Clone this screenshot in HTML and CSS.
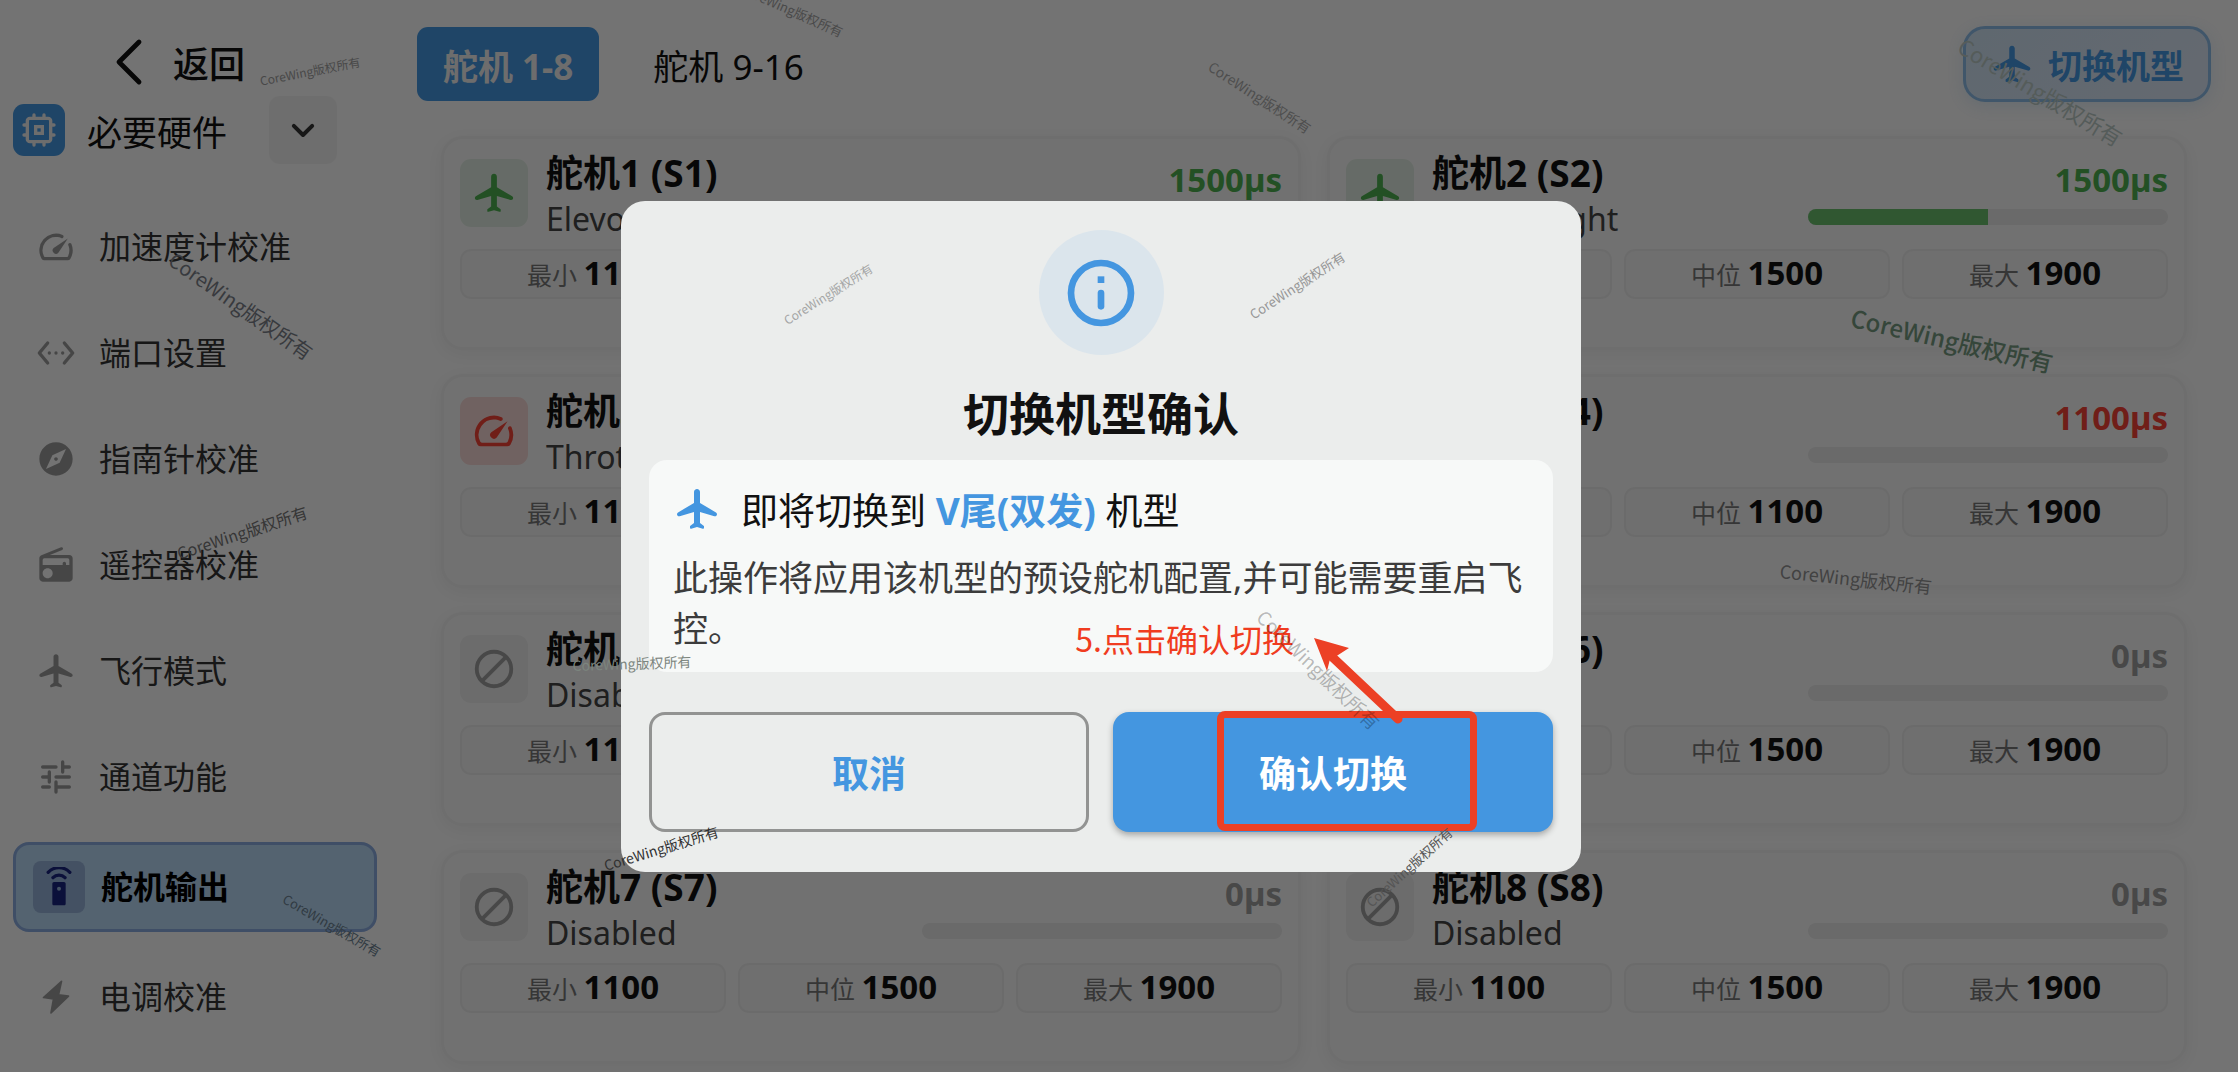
FILE: index.html
```
<!DOCTYPE html>
<html lang="zh-CN">
<head>
  <meta charset="UTF-8">
  <title>舵机输出</title>
  <link rel="stylesheet" href="styles.css">
</head>
<body>
  <svg class="sprite" aria-hidden="true">
    <symbol id="i-plane" viewBox="0 0 24 24"><path d="M21.48 13.7L13.5 9V3.5C13.5 2.67 12.83 2 12 2s-1.5.67-1.5 1.5V9l-7.98 4.7c-.32.18-.52.53-.52.89 0 .7.67 1.2 1.34 1.01L10.5 13.5V19l-1.8 1.35c-.13.09-.2.24-.2.4v.59c0 .33.32.57.64.48L12 21l2.86.82c.32.09.64-.15.64-.48v-.59c0-.16-.07-.31-.2-.4L13.5 19v-5.5l7.16 2.1c.67.19 1.34-.31 1.34-1.01 0-.36-.2-.71-.52-.89z"/></symbol>
    <symbol id="i-speed" viewBox="0 0 24 24"><path d="M19.46 10a1 1 0 0 0-.07 1 7.55 7.55 0 0 1 .52 1.81 8 8 0 0 1-.69 4.73 1 1 0 0 1-.89.53H5.68a1 1 0 0 1-.89-.54A8 8 0 0 1 13 6.06a7.69 7.69 0 0 1 2.11.56 1 1 0 0 0 1-.07 1 1 0 0 0-.17-1.76A10 10 0 0 0 3.35 19a2 2 0 0 0 1.72 1h13.85a2 2 0 0 0 1.74-1 10 10 0 0 0 .55-8.89 1 1 0 0 0-1.75-.11z"/><path d="M10.59 12.59a2 2 0 0 0 2.83 2.83l5.66-8.49z"/></symbol>
    <symbol id="i-ports" viewBox="0 0 24 24"><path d="M7 6L2 12l5 6M17 6l5 6-5 6" fill="none" stroke="currentColor" stroke-width="2" stroke-linecap="round" stroke-linejoin="round"/><circle cx="8" cy="12" r="1"/><circle cx="12" cy="12" r="1"/><circle cx="16" cy="12" r="1"/></symbol>
    <symbol id="i-compass" viewBox="0 0 24 24"><path d="M12 10.9c-.61 0-1.1.49-1.1 1.1s.49 1.1 1.1 1.1c.61 0 1.1-.49 1.1-1.1s-.49-1.1-1.1-1.1zM12 2C6.48 2 2 6.48 2 12s4.48 10 10 10 10-4.48 10-10S17.52 2 12 2zm2.19 12.19L6 18l3.81-8.19L18 6l-3.81 8.19z"/></symbol>
    <symbol id="i-radio" viewBox="0 0 24 24"><path d="M3.24 6.15C2.51 6.43 2 7.17 2 8v12c0 1.1.89 2 2 2h16c1.11 0 2-.9 2-2V8c0-1.11-.89-2-2-2H8.3l7.43-3a.9.9 0 0 0-.68-1.66L3.24 6.15zM7 20c-1.66 0-3-1.34-3-3s1.34-3 3-3 3 1.34 3 3-1.34 3-3 3zm13-8h-2v-1a1 1 0 0 0-2 0v1H4V9a1 1 0 0 1 1-1h14a1 1 0 0 1 1 1v3z"/></symbol>
    <symbol id="i-tune" viewBox="0 0 24 24"><path d="M4 6h8M16 3v6M16 6h4M4 12h4M8 9v6M12 12h8M4 18h4M12 15v6M12 18h8" fill="none" stroke="currentColor" stroke-width="2" stroke-linecap="round"/></symbol>
    <symbol id="i-remote" viewBox="0 0 24 24"><path fill-rule="evenodd" d="M15 9H9c-.55 0-1 .45-1 1v12c0 .55.45 1 1 1h6c.55 0 1-.45 1-1V10c0-.55-.45-1-1-1zm-3 5.200a1.200 1.200 0 1 1 0-2.400 1.200 1.200 0 0 1 0 2.400z"/><path d="M8.400 6.400a5 5 0 0 1 7.200 0M5.500 3.200a9 9 0 0 1 13 0" fill="none" stroke="currentColor" stroke-width="2" stroke-linecap="round"/></symbol>
    <symbol id="i-bolt" viewBox="0 0 24 24"><path d="M15.300 2.600L13.500 10.700l6 .8L9 21.500l1.500-8.300-6-.9z" stroke="currentColor" stroke-linejoin="round"/></symbol>
    <symbol id="i-block" viewBox="0 0 24 24"><g fill="none" stroke="currentColor" stroke-width="2"><circle cx="12" cy="12" r="9"/><path d="M18.300 5.700L5.700 18.300"/></g></symbol>
    <symbol id="i-chip" viewBox="0 0 24 24"><g fill="none" stroke="currentColor" stroke-width="2" stroke-linecap="round"><rect x="5" y="5" width="14" height="14" rx="1.500"/><rect x="10" y="10" width="4" height="4"/><path d="M9 3v2M15 3v2M9 19v2M15 19v2M3 9h2M3 15h2M19 9h2M19 15h2"/></g></symbol>
    <symbol id="i-down" viewBox="0 0 24 24"><path d="M6.500 9.500L12 15l5.500-5.500" fill="none" stroke="currentColor" stroke-width="2.400" stroke-linecap="round" stroke-linejoin="round"/></symbol>
    <symbol id="i-back" viewBox="0 0 24 24"><path d="M17 2L7 12l10 10" fill="none" stroke="currentColor" stroke-width="2.400" stroke-linecap="round" stroke-linejoin="round"/></symbol>
    <symbol id="i-info" viewBox="0 0 24 24"><circle cx="12" cy="12" r="9" fill="none" stroke="currentColor" stroke-width="2"/><path d="M11 7h2v2h-2z"/><rect x="11" y="11" width="2" height="6" rx="1"/></symbol>
  </svg>

  <div class="app">
    <aside class="sidebar">
      <button class="back"><svg><use href="#i-back"/></svg>返回</button>
      <div class="group">
        <span class="group-icon"><svg><use href="#i-chip"/></svg></span>
        <span class="group-title">必要硬件</span>
        <button class="group-toggle" aria-label="展开"><svg><use href="#i-down"/></svg></button>
      </div>
      <nav class="menu">
        <a href="#" class="menu-item"><span class="menu-icon"><svg><use href="#i-speed"/></svg></span>加速度计校准</a>
        <a href="#" class="menu-item"><span class="menu-icon"><svg><use href="#i-ports"/></svg></span>端口设置</a>
        <a href="#" class="menu-item"><span class="menu-icon"><svg><use href="#i-compass"/></svg></span>指南针校准</a>
        <a href="#" class="menu-item"><span class="menu-icon"><svg><use href="#i-radio"/></svg></span>遥控器校准</a>
        <a href="#" class="menu-item"><span class="menu-icon"><svg><use href="#i-plane"/></svg></span>飞行模式</a>
        <a href="#" class="menu-item"><span class="menu-icon"><svg><use href="#i-tune"/></svg></span>通道功能</a>
        <a href="#" class="menu-item active"><span class="menu-icon"><svg><use href="#i-remote"/></svg></span>舵机输出</a>
        <a href="#" class="menu-item"><span class="menu-icon"><svg><use href="#i-bolt"/></svg></span>电调校准</a>
      </nav>
    </aside>

    <main class="content">
      <header class="toolbar">
        <button class="tab selected">舵机 1-8</button>
        <button class="tab">舵机 9-16</button>
        <button class="switch"><svg><use href="#i-plane"/></svg>切换机型</button>
      </header>
      <div class="servos" id="servos"></div>
    </main>
  </div>

  <div class="overlay">
    <div class="dialog" role="dialog" aria-labelledby="dialogTitle">
      <div class="dialog-icon"><svg><use href="#i-info"/></svg></div>
      <h2 id="dialogTitle">切换机型确认</h2>
      <div class="notice">
        <div class="notice-title"><svg><use href="#i-plane"/></svg><span>即将切换到 <b>V尾(双发)</b> 机型</span></div>
        <p>此操作将应用该机型的预设舵机配置,并可能需要重启飞控。</p>
      </div>
      <div class="actions">
        <button class="btn cancel">取消</button>
        <button class="btn confirm">确认切换</button>
        <div class="mark">
          <span class="mark-text">5.点击确认切换</span>
          <svg class="mark-arrow" viewBox="0 0 100 100"><path d="M24 25L94 91" stroke="#ec4025" stroke-width="9" stroke-linecap="round"/><path d="M10 10L45 20 31 29 26 31 23 43z" fill="#ec4025"/></svg>
        </div>
      </div>
    </div>
  </div>

  <div class="watermarks" id="watermarks"></div>

  <script>
    const servos = [
      { name: "Elevon Left", icon: "plane", tone: "green", value: 1500, mid: 1500, fill: 50 },
      { name: "Elevon Right", icon: "plane", tone: "green", value: 1500, mid: 1500, fill: 50 },
      { name: "Throttle", icon: "speed", tone: "red", value: 1100, mid: 1100, fill: 0 },
      { name: "Throttle", icon: "speed", tone: "red", value: 1100, mid: 1100, fill: 0 },
      { name: "Disabled", icon: "block", tone: "gray", value: 0, mid: 1500, fill: 0 },
      { name: "Disabled", icon: "block", tone: "gray", value: 0, mid: 1500, fill: 0 },
      { name: "Disabled", icon: "block", tone: "gray", value: 0, mid: 1500, fill: 0 },
      { name: "Disabled", icon: "block", tone: "gray", value: 0, mid: 1500, fill: 0 }
    ];

    document.getElementById("servos").innerHTML = servos.map((s, i) => `
      <section class="card ${s.tone}">
        <div class="card-head">
          <span class="card-icon"><svg><use href="#i-${s.icon}"/></svg></span>
          <div class="card-name">
            <h3>舵机${i + 1} (S${i + 1})</h3>
            <div>${s.name}</div>
          </div>
          <div class="card-value">
            <strong>${s.value}µs</strong>
            <div class="bar"><div class="bar-fill" style="width: ${s.fill}%"></div></div>
          </div>
        </div>
        <div class="limits">
          <div>最小 <b>1100</b></div>
          <div>中位 <b>${s.mid}</b></div>
          <div>最大 <b>1900</b></div>
        </div>
      </section>`).join("");

    // x, y of the centre, font size, angle, color
    const marks = [
      [310, 71, 12, -11, "#484848"],
      [241, 306, 20, 35, "#383a3e"],
      [242, 532, 16, -18, "#363636"],
      [792, 10, 13, 24, "#4a4a4a"],
      [1260, 97, 14, 33, "#4e4e4e"],
      [2041, 91, 22, 31, "#555c5a"],
      [1952, 340, 24, 13, "#35463a", 500],
      [1856, 578, 18, 6, "#424242"],
      [828, 294, 12, -32, "#a4a5a5"],
      [1297, 285, 13, -33, "#969696"],
      [632, 663, 14, -2, "#7c857e"],
      [661, 848, 14, -17, "#303030"],
      [1319, 669, 19, 44, "rgba(0,0,0,.27)"],
      [1409, 867, 13, -42, "#555555"],
      [332, 925, 13, 30, "#303a42"]
    ];

    const layer = document.getElementById("watermarks");
    marks.forEach(([x, y, size, angle, color, weight]) => {
      const span = document.createElement("span");
      span.textContent = "CoreWing版权所有";
      span.style.left = x + "px";
      span.style.top = y + "px";
      span.style.fontSize = size + "px";
      span.style.fontWeight = weight || 400;
      span.style.color = color;
      span.style.transform = `translate(-50%, -50%) rotate(${angle}deg)`;
      layer.appendChild(span);
    });
  </script>
</body>
</html>
```
FILE: styles.css
```
* {
  box-sizing: border-box;
}
body {
  margin: 0;
  height: 100vh;
  overflow: hidden;
  position: relative;
  background: #fafafa;
  color: #111;
  font-family: "Noto Sans", "Noto Sans CJK SC", sans-serif;
}
button {
  font-family: inherit;
  cursor: pointer;
  border: none;
  background: none;
  padding: 0;
  color: inherit;
}
svg {
  display: block;
  fill: currentColor;
  flex-shrink: 0;
}
h2, h3, p {
  margin: 0;
}
.sprite {
  display: none;
}
.app {
  display: flex;
  height: 100%;
}

/* sidebar */
.sidebar {
  width: 390px;
  flex-shrink: 0;
  padding: 28px 13px 0;
}
.back {
  display: flex;
  align-items: center;
  gap: 20px;
  height: 68px;
  padding-left: 92px;
  font-size: 36px;
  font-weight: 500;
}
.back svg {
  width: 48px;
  height: 48px;
}
.group {
  display: flex;
  align-items: center;
  width: 324px;
  height: 68px;
}
.group-icon {
  width: 52px;
  height: 52px;
  border-radius: 11px;
  background: #4496e0;
  color: #eee;
  display: flex;
  align-items: center;
  justify-content: center;
  margin-right: 22px;
}
.group-icon svg {
  width: 40px;
  height: 40px;
}
.group-title {
  font-size: 35px;
}
.group-toggle {
  width: 68px;
  height: 68px;
  margin-left: auto;
  border-radius: 11px;
  background: #f0f0f0;
  color: #333;
  display: flex;
  align-items: center;
  justify-content: center;
}
.group-toggle svg {
  width: 40px;
  height: 40px;
}
.menu {
  display: flex;
  flex-direction: column;
  gap: 24px;
  margin-top: 42px;
}
.menu-item {
  display: flex;
  align-items: center;
  gap: 20px;
  height: 82px;
  padding: 0 17px;
  border: 3px solid transparent;
  border-radius: 16px;
  color: #333;
  font-size: 32px;
  line-height: 44px;
  text-decoration: none;
}
.menu-icon {
  width: 46px;
  height: 52px;
  display: flex;
  align-items: center;
  justify-content: center;
  color: #9a9a9a;
}
.menu-icon svg {
  width: 40px;
  height: 40px;
}
.menu-item.active {
  gap: 16px;
  height: 90px;
  background: #b7d7f3;
  border-color: #89aade;
  color: #000;
  font-weight: 700;
}
.active .menu-icon {
  width: 52px;
  border-radius: 8px;
  background: #94b0d7;
  color: #1a237e;
}

/* servo list */
.content {
  flex: 1;
  padding: 26px 27px 0;
}
.toolbar {
  display: flex;
  align-items: center;
  gap: 28px;
  height: 76px;
}
.tab {
  height: 74px;
  padding: 0 26px;
  border-radius: 11px;
  font-size: 35px;
}
.tab.selected {
  background: #4496e0;
  color: #eee;
  font-weight: 700;
}
.switch {
  display: flex;
  align-items: center;
  gap: 14px;
  height: 76px;
  margin-left: auto;
  padding: 0 24px;
  border: 3px solid #8dbbe6;
  border-radius: 22px;
  background: linear-gradient(135deg, #cfe2f2, #dbe5f4);
  box-shadow: 0 4px 16px rgba(68, 150, 224, 0.15);
  color: #4496e0;
  font-size: 34px;
  font-weight: 700;
}
.switch svg {
  width: 44px;
  height: 44px;
}
.servos {
  display: grid;
  grid-template-columns: 1fr 1fr;
  grid-auto-rows: minmax(214px, auto);
  gap: 24px 26px;
  margin: 34px 24px 0;
}
.card {
  padding: 11px 16px;
  border: 3px solid #efefef;
  border-radius: 22px;
  background: #f7f7f7;
  box-shadow: 0 4px 16px rgba(0, 0, 0, 0.05);
}
.card-head {
  display: flex;
  align-items: flex-start;
  height: 93px;
  margin-bottom: 6px;
}
.card-icon {
  width: 68px;
  height: 68px;
  margin: 9px 18px 0 0;
  border-radius: 11px;
  display: flex;
  align-items: center;
  justify-content: center;
}
.card-icon svg {
  width: 46px;
  height: 46px;
}
.card-name {
  color: #444;
  font-size: 32px;
  line-height: 46px;
}
.card-name h3 {
  color: #111;
  font-size: 37px;
  font-weight: 700;
  line-height: 46px;
}
.card-value {
  width: 360px;
  margin-left: auto;
  padding-top: 8px;
  text-align: right;
}
.card-value strong {
  display: block;
  font-size: 33px;
  line-height: 44px;
}
.bar {
  height: 16px;
  margin-top: 7px;
  border-radius: 8px;
  background: #e6e6e6;
  overflow: hidden;
}
.bar-fill {
  height: 100%;
  background: #69bd6c;
}
.green .card-icon {
  background: #dfeae0;
}
.green .card-icon,
.green strong {
  color: #4caf50;
}
.red .card-icon {
  background: #f4d6d3;
}
.red .card-icon,
.red strong {
  color: #f44336;
}
.gray .card-icon {
  background: #ebebeb;
}
.gray .card-icon,
.gray strong {
  color: #9e9e9e;
}
.limits {
  display: flex;
  gap: 12px;
}
.limits div {
  flex: 1;
  height: 50px;
  border: 2px solid #eaeaea;
  border-radius: 11px;
  background: #f1f1f1;
  color: #777;
  font-size: 25px;
  line-height: 44px;
  text-align: center;
}
.limits b {
  color: #111;
  font-size: 33px;
}

/* dialog */
.overlay {
  position: absolute;
  inset: 0;
  display: flex;
  align-items: center;
  justify-content: center;
  padding-right: 36px;
  background: rgba(0, 0, 0, 0.54);
}
.dialog {
  width: 90%;
  max-width: 960px;
  padding: 29px 28px 40px;
  border-radius: 24px;
  background: #ebedec;
}
.dialog-icon {
  width: 125px;
  height: 125px;
  margin: 0 auto;
  padding-top: 2px;
  border-radius: 50%;
  background: #dbe5ec;
  color: #4496e0;
  display: flex;
  align-items: center;
  justify-content: center;
}
.dialog-icon svg {
  width: 80px;
  height: 80px;
}
.dialog h2 {
  margin: 24px 0 13px;
  font-size: 46px;
  line-height: 68px;
  text-align: center;
}
.notice {
  padding: 24px 24px 18px;
  border-radius: 18px;
  background: #f7f9f8;
}
.notice-title {
  display: flex;
  align-items: center;
  gap: 20px;
  height: 50px;
  font-size: 37px;
}
.notice-title b {
  color: #4496e0;
}
.notice-title svg {
  width: 48px;
  height: 50px;
  color: #4496e0;
}
.notice p {
  margin-top: 18px;
  color: #3c3c3c;
  font-size: 35px;
  line-height: 51px;
}
.actions {
  position: relative;
  display: grid;
  grid-template-columns: 1fr 1fr;
  gap: 24px;
  margin-top: 40px;
}
.btn {
  height: 120px;
  border-radius: 16px;
  font-size: 37px;
  font-weight: 700;
}
.cancel {
  border: 3px solid #929392;
  color: #4496e0;
}
.confirm {
  background: #4496e0;
  color: #fff;
  box-shadow: 0 3px 6px rgba(0, 0, 0, 0.3);
}

/* step marking on top of the confirm button */
.mark {
  position: absolute;
  right: 76px;
  top: -1px;
  width: 260px;
  height: 120px;
  border: 7px solid #ec4025;
  border-radius: 8px;
}
.mark-text {
  position: absolute;
  right: 176px;
  bottom: 162px;
  color: #f03c20;
  font-family: "Noto Sans CJK SC", sans-serif;
  font-size: 32px;
  line-height: 48px;
  white-space: nowrap;
}
.mark-arrow {
  position: absolute;
  right: 66px;
  bottom: 96px;
  width: 100px;
  height: 100px;
}

.watermarks {
  position: absolute;
  inset: 0;
  overflow: hidden;
  pointer-events: none;
  font-family: "Noto Sans CJK SC", sans-serif;
}
.watermarks span {
  position: absolute;
  line-height: 1;
  white-space: nowrap;
}
```
